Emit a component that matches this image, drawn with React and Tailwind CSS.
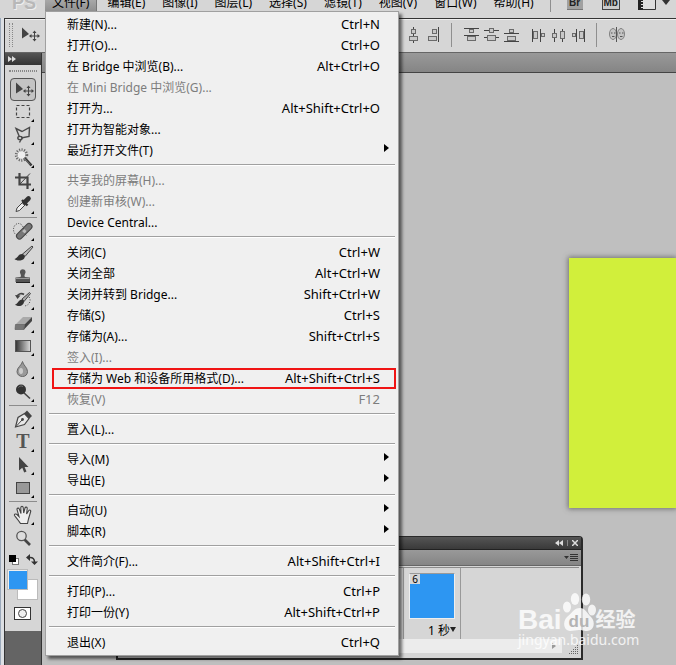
const menus = ["编辑(E)", "图像(I)", "图层(L)", "选择(S)", "滤镜(T)", "视图(V)", "窗口(W)", "帮助(H)"];

const fileMenu = [
  [
    { label: "新建(N)...", keys: "Ctrl+N" },
    { label: "打开(O)...", keys: "Ctrl+O" },
    { label: "在 Bridge 中浏览(B)...", keys: "Alt+Ctrl+O" },
    { label: "在 Mini Bridge 中浏览(G)...", disabled: true },
    { label: "打开为...", keys: "Alt+Shift+Ctrl+O" },
    { label: "打开为智能对象..." },
    { label: "最近打开文件(T)", submenu: true },
  ],
  [
    { label: "共享我的屏幕(H)...", disabled: true },
    { label: "创建新审核(W)...", disabled: true },
    { label: "Device Central..." },
  ],
  [
    { label: "关闭(C)", keys: "Ctrl+W" },
    { label: "关闭全部", keys: "Alt+Ctrl+W" },
    { label: "关闭并转到 Bridge...", keys: "Shift+Ctrl+W" },
    { label: "存储(S)", keys: "Ctrl+S" },
    { label: "存储为(A)...", keys: "Shift+Ctrl+S" },
    { label: "签入(I)...", disabled: true },
    { label: "存储为 Web 和设备所用格式(D)...", keys: "Alt+Shift+Ctrl+S", marked: true },
    { label: "恢复(V)", keys: "F12", disabled: true },
  ],
  [{ label: "置入(L)..." }],
  [
    { label: "导入(M)", submenu: true },
    { label: "导出(E)", submenu: true },
  ],
  [
    { label: "自动(U)", submenu: true },
    { label: "脚本(R)", submenu: true },
  ],
  [{ label: "文件简介(F)...", keys: "Alt+Shift+Ctrl+I" }],
  [
    { label: "打印(P)...", keys: "Ctrl+P" },
    { label: "打印一份(Y)", keys: "Alt+Shift+Ctrl+P" },
  ],
  [{ label: "退出(X)", keys: "Ctrl+Q" }],
];

const MoveShape = () => (
  <>
    <path d="M6 4.5V15.5L13 11Z" fill="#444" />
    <path d="M18.5 8.5V17.5M14 13H23" stroke="#444" strokeWidth="1" />
    <path d="M16.5 10L18.5 7.5L20.5 10ZM16.5 16L18.5 18.5L20.5 16ZM15.5 11L13 13L15.5 15ZM21.5 11L24 13L21.5 15Z" fill="#444" />
  </>
);

const toolGroups = [
  [
    { name: "移动工具", active: true, shape: <MoveShape /> },
    {
      name: "矩形选框工具",
      more: true,
      shape: <rect x="6.5" y="4.5" width="13" height="12" fill="none" stroke="#444" strokeWidth="1.2" strokeDasharray="3 2" />,
    },
    {
      name: "多边形套索工具",
      more: true,
      shape: (
        <g fill="none" stroke="#4a4a4a" strokeWidth="1.4">
          <path d="M9.5 13L6 4.5L12 7.5L19.5 3.5L19 12.5L11 14" />
          <ellipse cx="10" cy="14" rx="2.2" ry="1.6" />
          <path d="M11 15.5L9.5 18.5" />
        </g>
      ),
    },
    {
      name: "魔棒工具",
      more: true,
      shape: (
        <>
          <path d="M12 8L21.5 18.5" stroke="#333" strokeWidth="2.6" />
          <path d="M14 11L20 17.5" stroke="#999" strokeWidth="0.7" />
          <circle cx="11.5" cy="8" r="5" fill="none" stroke="#666" strokeWidth="3.4" strokeDasharray="1 1.3" />
          <circle cx="11.5" cy="8" r="3.8" fill="#eee" />
        </>
      ),
    },
    {
      name: "裁剪工具",
      more: true,
      shape: (
        <>
          <path d="M9.5 3V14.5H21M5 7.5H17.5V19" fill="none" stroke="#444" strokeWidth="2.2" />
          <path d="M10 14L20 3.5" stroke="#444" />
        </>
      ),
    },
    {
      name: "吸管工具",
      more: true,
      shape: (
        <>
          <path d="M6 18.5L7 15L13 9L15.5 11.5L9.5 17.5Z" fill="#eee" stroke="#444" />
          <path d="M12 7L17.5 12.5" stroke="#333" strokeWidth="2.4" />
          <path d="M14.5 9.5L18.5 5.5" stroke="#333" strokeWidth="4.6" strokeLinecap="round" />
        </>
      ),
    },
  ],
  [
    {
      name: "污点修复画笔工具",
      more: true,
      shape: (
        <>
          <ellipse cx="8.5" cy="9.5" rx="5" ry="6" fill="none" stroke="#333" strokeDasharray="1 1.5" />
          <path d="M9.5 16L19 6.5" stroke="#444" strokeWidth="7" strokeLinecap="round" />
          <path d="M9.5 16L19 6.5" stroke="#777" strokeWidth="5" strokeLinecap="round" />
          <path d="M12 11L16.5 15.5M13.5 8.5L17.5 12.5" stroke="#333" strokeDasharray="1 1" />
          <path d="M12 11.3L14.4 9L16.8 11.2L14.4 13.6Z" fill="#bbb" />
        </>
      ),
    },
    {
      name: "画笔工具",
      more: true,
      shape: (
        <>
          <path d="M12 11.5L22 3L23 4L15 13.5Z" fill="#bbb" stroke="#444" strokeWidth="1" />
          <path d="M4.5 16C8 15 8 11 12 11C16 11.5 15.5 16 12 17C9 18 6 17.5 4.5 16Z" fill="#333" />
        </>
      ),
    },
    {
      name: "仿制图章工具",
      more: true,
      shape: (
        <>
          <path d="M10.5 11C12 9 9.5 7.5 10 5.5C10.5 2.5 15 2.5 15.5 5.5C16 7.5 13.5 9 15 11L20 11.5V16H5.5V11.5Z" fill="#555" />
          <path d="M6 12.5H19.5" stroke="#999" />
          <path d="M6 16.5H20" stroke="#222" />
        </>
      ),
    },
    {
      name: "历史记录画笔工具",
      more: true,
      shape: (
        <>
          <path d="M12 10L19.5 3.5L20.5 4.5L14 12.5Z" fill="#aaa" stroke="#444" />
          <path d="M5 15.5C8 15 8.5 10.5 12 10.5C15 11 14.5 15 11.5 16.5C9 17.5 6.5 17 5 15.5Z" fill="#333" />
          <path d="M7 7.5C8 4.5 12 4 14 5.5" fill="none" stroke="#444" strokeWidth="1.6" />
          <path d="M5 6L10.5 6.5L7.5 10Z" fill="#444" />
          <path d="M19 8C22 12 18.5 17 14 17" fill="none" stroke="#444" strokeDasharray="1 1.6" />
        </>
      ),
    },
    {
      name: "橡皮擦工具",
      more: true,
      shape: (
        <>
          <path d="M5.5 12.5L13 5H22L14.5 12.5Z" fill="#aaa" />
          <path d="M14.5 12.5L22 5V9L14 17.5Z" fill="#444" />
          <path d="M5.5 12.5H14.5L14 17.5H5Z" fill="#777" stroke="#555" strokeWidth="0.6" />
        </>
      ),
    },
    {
      name: "渐变工具",
      more: true,
      shape: (
        <>
          <defs>
            <linearGradient id="ramp">
              <stop stopColor="#333" />
              <stop offset="1" stopColor="#ddd" />
            </linearGradient>
          </defs>
          <rect x="5.5" y="5.5" width="15" height="11" fill="url(#ramp)" stroke="#555" />
        </>
      ),
    },
    {
      name: "模糊工具",
      more: true,
      shape: (
        <>
          <path d="M12.5 3.5C13 7 17.5 9.5 17.5 13.5C17.5 16.5 15.5 18.5 12.5 18.5C9.5 18.5 7 16.5 7 13.5C7 9.5 12 7 12.5 3.5Z" fill="#999" stroke="#666" />
          <ellipse cx="11" cy="13" rx="2" ry="3" fill="#ccc" />
        </>
      ),
    },
    {
      name: "减淡工具",
      more: true,
      shape: (
        <>
          <path d="M13 11L20 17.5" stroke="#444" strokeWidth="1.6" />
          <circle cx="11" cy="8.5" r="5" fill="#333" />
          <path d="M8.5 6.5C9.5 5 11.5 4.5 13 5.5" fill="none" stroke="#777" />
        </>
      ),
    },
  ],
  [
    {
      name: "钢笔工具",
      more: true,
      shape: (
        <>
          <path d="M5.5 19L8 9.5L14.5 5.5L19 10.5L14.5 16.5Z" fill="#e8e8e8" stroke="#444" strokeWidth="1.2" />
          <path d="M14 5.5L17 2.5L22 8L19.5 10.5Z" fill="#444" />
          <path d="M6 18.5L12 12" stroke="#444" />
          <circle cx="12.5" cy="11.5" r="1.4" fill="#444" />
        </>
      ),
    },
    {
      name: "横排文字工具",
      more: true,
      shape: (
        <text x="13" y="17" textAnchor="middle" fontFamily="Liberation Serif, serif" fontSize="20" fontWeight="bold" fill="#555">
          T
        </text>
      ),
    },
    {
      name: "路径选择工具",
      more: true,
      shape: <path d="M9 3V16.5L12.3 13.8L14.2 18.5L16.5 17.5L14.6 13H18.5Z" fill="#444" />,
    },
    {
      name: "矩形工具",
      more: true,
      shape: <rect x="6.5" y="5.5" width="13" height="11" fill="#999" stroke="#444" />,
    },
  ],
  [
    {
      name: "抓手工具",
      more: true,
      shape: (
        <path
          d="M10.5 19.5C9 17 6.5 14 4.5 11.5C4 10 6 9.5 7 10.5L9 12.5L7 5.5C6.8 4 8.8 3.5 9.3 5L11 9.5L10.8 3.5C11 2 13 2 13.2 3.5L13.7 9L15 4C15.5 2.5 17.3 3 17.2 4.5L16.6 10L18.8 6.5C19.6 5.5 21 6.2 20.7 7.5L18.5 15L17.5 19.5Z"
          fill="#eee"
          stroke="#444"
          strokeWidth="1.1"
        />
      ),
    },
    {
      name: "缩放工具",
      shape: (
        <>
          <path d="M14.5 12.5L20 18" stroke="#444" strokeWidth="2.6" />
          <circle cx="11.5" cy="9" r="4.7" fill="#ddd" stroke="#555" strokeWidth="1.3" />
        </>
      ),
    },
  ],
];

const alignIcons = [
  [
    { name: "水平居中对齐", bars: "M7.5 0V16", boxes: [[5, 2, 5, 5], [3, 9, 9, 5]] },
    { name: "右对齐", bars: "M14.5 0V15", boxes: [[8, 2, 5, 5], [4, 9, 9, 5]] },
  ],
  [
    { name: "按顶分布", bars: "M0 1.5H15M0 8.5H15", boxes: [[5, 2, 5, 4], [3, 9, 9, 5]] },
    { name: "垂直居中分布", bars: "M0 3.5H15M0 10.5H15", boxes: [[5, 1, 5, 5], [3, 8, 9, 6]] },
    { name: "按底分布", bars: "M0 6.5H15M0 14.5H15", boxes: [[5, 2, 5, 4], [3, 9, 9, 5]] },
  ],
  [
    { name: "按左分布", bars: "M1.5 2V15M9.5 2V15", boxes: [[2, 4, 5, 8], [10, 6, 4, 4]] },
    { name: "水平居中分布", bars: "M3.5 2V15M11.5 2V15", boxes: [[1, 6, 5, 5], [9, 4, 5, 8]] },
    { name: "按右分布", bars: "M5.5 2V15M13.5 2V15", boxes: [[1, 6, 4, 4], [8, 4, 5, 8]] },
  ],
];

const AlignButton = ({ icon }) => (
  <button type="button" aria-label={icon.name} className="block">
    <svg width="15" height="16" viewBox="0 0 15 16" className="block">
      <path d={icon.bars} stroke="#444" fill="none" />
      {icon.boxes.map(([x, y, w, h]) => (
        <rect key={`${x}-${y}`} x={x + 0.5} y={y + 0.5} width={w - 1} height={h - 1} fill="#c8c8c8" stroke="#6a6a6a" />
      ))}
    </svg>
  </button>
);

const Divider = () => <span className="h-6 w-px bg-[#8f8f8f]" />;

const MenuRow = ({ item }) => (
  <li className="relative">
    <button
      type="button"
      disabled={item.disabled}
      className={`flex h-[21px] w-full items-center justify-between px-[21px] pr-[18px] text-left leading-[21px] ${
        item.disabled ? "text-[#7d7d7d]" : "text-black"
      }`}
    >
      <span>{item.label}</span>
      {item.keys && <span className="text-[13px]">{item.keys}</span>}
    </button>
    {item.submenu && (
      <svg width="5" height="8" viewBox="0 0 5 8" className="absolute right-[9px] top-1">
        <path d="M0 0L5 4L0 8Z" fill="#000" />
      </svg>
    )}
    {item.marked && <span className="pointer-events-none absolute inset-y-0 left-1.5 right-0.5 border-2 border-[#f01414]" />}
  </li>
);

const FileMenu = () => (
  <div className="absolute left-0 top-full z-20 w-[354px] border border-[#a0a0a0] bg-[#f0f0f0] py-0.5 shadow-[3px_3px_3px_rgba(0,0,0,0.55)]">
    {fileMenu.map((group, i) => (
      <ul key={i}>
        {i > 0 && <li className="mx-[3px] mb-1 mt-[3px] h-0.5 border-b border-t border-b-white border-t-[#a0a0a0]" />}
        {group.map((item) => (
          <MenuRow key={item.label} item={item} />
        ))}
      </ul>
    ))}
  </div>
);

const MenuBar = () => (
  <nav className="flex h-[18px] items-start bg-[#d6d6d6]">
    <div className="w-[45px] pl-3 font-['Liberation_Sans',sans-serif] text-[18px] font-bold leading-[6px] text-[#b8b8b8] [text-shadow:1px_1px_0_#eee]">
      PS
    </div>
    <div className="relative mr-2.5">
      <button
        type="button"
        className="flex h-[11px] items-start border-r border-[#777] bg-gradient-to-b from-[#a8a8a8] to-[#909090] px-[7px] leading-[5px]"
      >
        文件(F)
      </button>
      <FileMenu />
    </div>
    <div className="flex gap-[17px]">
      {menus.map((name) => (
        <button key={name} type="button" className="block leading-[5px]">
          {name}
        </button>
      ))}
    </div>
    <span className="ml-4 h-3 w-px bg-[#8f8f8f]" />
    <div className="ml-4 flex items-start gap-[19px] font-['Liberation_Sans',sans-serif] text-[10px] font-bold text-[#222]">
      <button type="button" className="flex h-2.5 w-4 items-start justify-center border-b border-[#777] bg-[#a0a0a0] leading-[6px]">
        Br
      </button>
      <button type="button" className="flex h-2.5 w-[18px] items-start justify-center border border-t-0 border-[#444] bg-[#ccc] leading-[6px]">
        Mb
      </button>
    </div>
    <button type="button" aria-label="屏幕模式" className="ml-[18px] block">
      <svg width="33" height="11" viewBox="0 0 33 11" className="block">
        <path d="M0.5 0V9.5H17.5V0" fill="#ddd" stroke="#333" />
        <path d="M0 0H5V10H0Z" fill="#222" />
        <path d="M3 1.5H5M3 4.5H5M3 7.5H5" stroke="#ddd" />
        <path d="M24 0H32L28 5Z" fill="#333" />
      </svg>
    </button>
  </nav>
);

const OptionsBar = () => (
  <div className="flex h-[35px] items-center border-b border-t border-b-[#666] border-t-[#333] bg-[#d6d6d6] pb-0.5 shadow-[inset_0_1px_0_#eee]">
    <span className="ml-1 h-6 w-1 border-x border-dotted border-[#888]" />
    <svg width="26" height="23" viewBox="0 0 26 23" className="ml-[3px]">
      <MoveShape />
    </svg>
    <div className="ml-[364px] flex items-center">
      <div className="mr-3 flex gap-[3px]">
        {alignIcons[0].map((icon) => (
          <AlignButton key={icon.name} icon={icon} />
        ))}
      </div>
      <Divider />
      <div className="ml-3 flex gap-[5px]">
        {alignIcons[1].map((icon) => (
          <AlignButton key={icon.name} icon={icon} />
        ))}
      </div>
      <div className="ml-3 mr-2.5 flex gap-[5px]">
        {alignIcons[2].map((icon) => (
          <AlignButton key={icon.name} icon={icon} />
        ))}
      </div>
      <Divider />
      <button type="button" aria-label="自动对齐图层" className="ml-3 block">
        <svg width="16" height="16" viewBox="0 0 16 16" className="block">
          <ellipse cx="4" cy="7" rx="3.5" ry="5.5" fill="#c4c4c4" stroke="#808080" />
          <ellipse cx="12" cy="7" rx="3.5" ry="5.5" fill="#c4c4c4" stroke="#808080" />
          <path d="M2 6H3.5M5 6H6.5M3 9.5H5.5M10 6H11.5M13 6H14.5M11 9.5H13.5" stroke="#555" />
          <path d="M7.5 0V15" stroke="#555" />
        </svg>
      </button>
    </div>
  </div>
);

const Toolbar = () => (
  <aside className="flex w-[37px] flex-col border-r border-[#333] bg-[#646464]">
    <div className="flex h-3 items-center bg-gradient-to-b from-[#555] to-[#333] pl-[3px]">
      <svg width="8" height="6" viewBox="0 0 8 6">
        <path d="M0 0L4 3L0 6ZM4 0L8 3L4 6Z" fill="#ddd" />
      </svg>
    </div>
    <div className="flex flex-col items-center bg-[#d6d6d6]">
      <span className="mb-1.5 mt-[5px] h-0.5 w-7 border-b border-t border-dotted border-[#888]" />
      {toolGroups.map((group, i) => (
        <div key={i} className="flex flex-col">
          {i > 0 && <span className="mb-0.5 mt-px h-px w-7 self-center bg-[#8c8c8c]" />}
          {group.map((tool) => (
            <button
              key={tool.name}
              type="button"
              aria-label={tool.name}
              className={`mx-auto block h-[23px] w-[26px] ${
                tool.active ? "rounded-sm bg-[#c4c4c4] outline outline-1 -outline-offset-1 outline-[#555]" : ""
              }`}
            >
              <svg width="26" height="23" viewBox="0 0 26 23" className="block">
                {tool.shape}
                {tool.more && <path d="M24 18V21H21Z" fill="#000" />}
              </svg>
            </button>
          ))}
        </div>
      ))}
      <svg width="36" height="81" viewBox="0 0 36 81" className="block">
        <rect x="7.5" y="8.5" width="6" height="6" fill="#fff" stroke="#777" />
        <rect x="4" y="5" width="7" height="7" fill="#000" />
        <path d="M24 7.5C28 7 29.5 9 29.5 12" fill="none" stroke="#333" strokeWidth="1.5" />
        <path d="M21 7.5L25 4V11ZM26 11.5H33L29.500 15Z" fill="#333" />
        <rect x="12.5" y="29.5" width="20" height="20" fill="#fff" stroke="#bbb" />
        <rect x="2.5" y="19.5" width="20" height="20" fill="#eee" stroke="#bbb" />
        <rect x="4" y="21" width="18" height="18" fill="#2d96f2" />
        <rect x="9.5" y="57.5" width="16" height="12" fill="#fff" stroke="#333" />
        <circle cx="17.5" cy="63.5" r="4" fill="#eee" stroke="#444" />
      </svg>
    </div>
  </aside>
);

const AnimationPanel = () => (
  <section className="absolute left-[116px] top-[536px] z-10 w-[467px] rounded-t border-2 border-t border-[#2a2a2a] bg-[#d6d6d6]">
    <header className="flex h-3 items-center justify-end gap-1 bg-gradient-to-b from-[#555] to-[#3a3a3a] pr-[3px]">
      <button type="button" aria-label="折叠">
        <svg width="8" height="6" viewBox="0 0 8 6" className="block">
          <path d="M4 0L0 3L4 6ZM8 0L4 3L8 6Z" fill="#ddd" />
        </svg>
      </button>
      <span className="h-1.5 w-px bg-[#888]" />
      <button type="button" aria-label="关闭">
        <svg width="6" height="6" viewBox="0 0 6 6" className="block">
          <path d="M0 0L6 6M6 0L0 6" stroke="#ddd" strokeWidth="1.5" />
        </svg>
      </button>
    </header>
    <div className="flex h-[17px] items-center justify-end border-b border-t border-b-[#666] border-t-[#222] bg-gradient-to-b from-[#999] to-[#858585] pr-[3px]">
      <button type="button" aria-label="面板菜单">
        <svg width="14" height="8" viewBox="0 0 14 8" className="block">
          <path d="M0 2H5L2.5 5ZM6 0H14V1H6ZM6 2H14V3H6ZM6 4H14V5H6ZM6 6H14V7H6Z" fill="#333" />
        </svg>
      </button>
    </div>
    <div className="mx-0.5 mt-px flex h-[72px] justify-start border-t border-[#8c8c8c]">
      <div className="ml-[283px] flex w-[58px] flex-col items-center border-x border-[#999] pt-[5px]">
        <div className="h-[46px] w-[46px] border border-[#eee] border-t-[#999] bg-[#2d96f2]">
          <div className="flex size-2.5 items-center justify-center bg-[#d6d6d6] font-['Noto_Sans',sans-serif] text-[10px] leading-none">6</div>
        </div>
        <button type="button" className="mt-1 flex items-center self-end pr-1 leading-4">
          1 秒
          <svg width="6" height="10" viewBox="0 0 6 10">
            <path d="M0 1H6L3 6Z" fill="#222" />
          </svg>
        </button>
      </div>
    </div>
    <div className="flex h-[19px] items-start justify-between pr-0.5">
      <div className="flex h-3.5 w-[444px] items-center justify-end bg-[#ececec] pr-1.5">
        <svg width="4" height="6" viewBox="0 0 4 6">
          <path d="M0 0L4 3L0 6Z" fill="#999" />
        </svg>
      </div>
      <svg width="10" height="10" viewBox="0 0 10 10" className="mt-1.5">
        <path d="M8 0.5H10M6 2.5H10M4 4.5H10M2 6.5H10M0 8.5H10" stroke="#666" strokeDasharray="1 1" />
      </svg>
    </div>
  </section>
);

const Watermark = () => (
  <div className="absolute left-[518px] top-[593px] z-20 w-[122px] text-white/80">
    <div className="flex items-end font-['Liberation_Sans','Noto_Sans_CJK_SC',sans-serif]">
      <span className="text-[28px] font-bold leading-[26px]">Bai</span>
      <svg width="34" height="40" viewBox="0 0 34 40">
        <g fill="#fff" fillOpacity="0.8">
          <ellipse cx="5" cy="14" rx="4" ry="5.5" />
          <ellipse cx="13" cy="6" rx="4.2" ry="6" />
          <ellipse cx="24" cy="6.5" rx="4.2" ry="6" />
          <ellipse cx="30" cy="17" rx="4" ry="5.5" />
          <path d="M18 15C23 15 25 20 29 24C34 29 32 38 25 38C21 38 20 37 17 37C14 37 12 38 8 38C2 38 0 29 5 24C10 20 12 15 18 15Z" />
        </g>
        <text x="17" y="34" textAnchor="middle" fontFamily="Liberation Sans, sans-serif" fontSize="17" fontWeight="bold" fill="#b4b4b4">
          du
        </text>
      </svg>
      <span className="text-[20px] font-bold leading-[26px]">经验</span>
    </div>
    <div className="whitespace-nowrap font-['Noto_Sans',sans-serif] text-[14px] leading-[14px]">jingyan.baidu.com</div>
  </div>
);

const App = () => {
  return (
    <div className="relative flex min-h-screen flex-col overflow-hidden bg-[#bfbfbf] font-['Noto_Sans','Noto_Sans_CJK_SC',sans-serif] text-xs text-black">
      <MenuBar />
      <div className="flex flex-1">
        <div className="w-[5px] border-l border-r border-l-[#9aa9bb] border-r-[#333] bg-[#dcdfe3]" />
        <div className="flex min-w-0 flex-1 flex-col">
          <OptionsBar />
          <div className="flex flex-1">
            <Toolbar />
            <main className="flex min-w-0 flex-1 flex-col overflow-hidden">
              <div className="h-5 border-b border-[#444] bg-gradient-to-b from-[#999] to-[#858585]" />
              <div className="ml-auto mt-[185px] h-[250px] w-[107px] bg-[#d1ef3b] shadow-[0_0_5px_1px_rgba(80,80,80,0.7)]" />
            </main>
          </div>
        </div>
      </div>
      <AnimationPanel />
      <Watermark />
    </div>
  );
};

export default App;
